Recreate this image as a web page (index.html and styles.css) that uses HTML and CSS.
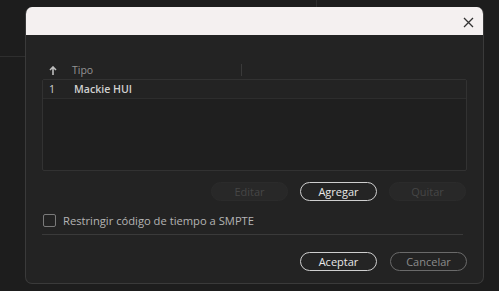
FILE: index.html
```html
<!DOCTYPE html>
<html lang="es">
<head>
<meta charset="utf-8">
<title>Superficie de control</title>
<link rel="stylesheet" href="styles.css">
</head>
<body>
<div class="dialog">
  <div class="titlebar">
    <button class="close" aria-label="Cerrar">
      <svg width="11" height="11" viewBox="0 0 11 11"><path d="M1 1L10 10M10 1L1 10" stroke="#333" stroke-width="1.3" fill="none"/></svg>
    </button>
  </div>
  <div class="content">
    <div class="thead">
      <span class="col-sort">
        <svg width="8" height="9" viewBox="0 0 8 9"><path d="M4 1V9M1 4L4 1L7 4" stroke="#bdbdbd" stroke-width="1.6" fill="none"/></svg>
      </span>
      <span class="col-type">Tipo</span>
      <span class="col-sep"></span>
    </div>
    <div class="list">
      <div class="row selected">
        <span class="num">1</span>
        <span class="name">Mackie HUI</span>
      </div>
    </div>
    <div class="actions">
      <button class="btn disabled">Editar</button>
      <button class="btn primary">Agregar</button>
      <button class="btn disabled">Quitar</button>
    </div>
    <label class="check">
      <span class="box"></span>
      <span>Restringir código de tiempo a SMPTE</span>
    </label>
    <div class="divider"></div>
    <div class="footer">
      <button class="btn primary">Aceptar</button>
      <button class="btn secondary">Cancelar</button>
    </div>
  </div>
</div>
</body>
</html>
```
FILE: styles.css
```css
html, body {
  margin: 0;
  padding: 0;
}
body {
  width: 499px;
  height: 291px;
  overflow: hidden;
  background-color: #1d1d1d;
  background-image:
    linear-gradient(#2c2c2c, #2c2c2c),
    linear-gradient(#2e2e2e, #2e2e2e);
  background-size: 1px 7px, 25px 1px;
  background-position: 316px 0, 0 56px;
  background-repeat: no-repeat;
  font-family: "Open Sans", "Noto Sans", sans-serif;
  padding: 7px 0 0 25px;
  box-sizing: border-box;
}
.dialog {
  width: 459px;
  height: 277px;
  box-sizing: border-box;
  border: 1px solid #3a3a3a;
  border-top: none;
  border-radius: 7px;
  background: #232323;
  overflow: hidden;
  display: flex;
  flex-direction: column;
}
.titlebar {
  height: 28px;
  background: #f4f0f0;
  display: flex;
  justify-content: flex-end;
  align-items: center;
  padding-right: 9px;
  flex-shrink: 0;
}
.close {
  background: none;
  border: none;
  padding: 0;
  width: 11px;
  height: 11px;
  display: flex;
  margin-top: 2px;
}
.content {
  padding: 26px 16px 0 16px;
  display: flex;
  flex-direction: column;
}
.thead {
  height: 18px;
  display: flex;
  align-items: center;
  font-size: 10.5px;
  color: #939393;
}
.col-sort {
  width: 30px;
  padding-left: 7px;
  display: flex;
  align-items: center;
  box-sizing: border-box;
}
.col-type {
  width: 169px;
}
.col-sep {
  width: 1px;
  height: 12px;
  background: #3a3a3a;
}
.list {
  height: 92px;
  box-sizing: border-box;
  border: 1px solid #323232;
  border-radius: 2px;
  background: #1f1f1f;
}
.row {
  height: 18px;
  display: flex;
  align-items: center;
  border-bottom: 1px solid #2d2d2d;
  font-size: 10.6px;
  color: #d0d0d0;
}
.row.selected {
  background: #232323;
}
.num {
  width: 31px;
  padding-left: 6px;
  box-sizing: border-box;
}
.name {
  font-weight: 600;
}
.actions {
  display: flex;
  justify-content: flex-end;
  gap: 12px;
  margin-top: 11px;
  padding-right: 1px;
}
.btn {
  width: 77px;
  height: 19px;
  box-sizing: border-box;
  border-radius: 10px;
  font-family: "Open Sans", "Noto Sans", sans-serif;
  font-size: 11px;
  padding: 0;
  line-height: 15px;
  background: transparent;
}
.btn.disabled {
  border: 1px solid #2b2b2b;
  background: #282828;
  color: #464646;
}
.btn.primary {
  border: 1.5px solid #cfcfcf;
  color: #e8e8e8;
  background: #242424;
}
.btn.secondary {
  border: 1.5px solid #6a6a6a;
  color: #8c8c8c;
}
.check {
  display: flex;
  align-items: center;
  gap: 7px;
  margin-top: 12px;
  margin-left: 1px;
  font-size: 11.2px;
  color: #b4b4b4;
}
.box {
  width: 13px;
  height: 13px;
  box-sizing: border-box;
  border: 1.5px solid #7a7a7a;
  border-radius: 2px;
}
.divider {
  height: 1px;
  background: #3a3a3a;
  margin-top: 6px;
  margin-right: 4px;
}
.footer {
  display: flex;
  justify-content: flex-end;
  gap: 13px;
  margin-top: 17px;
}
```
